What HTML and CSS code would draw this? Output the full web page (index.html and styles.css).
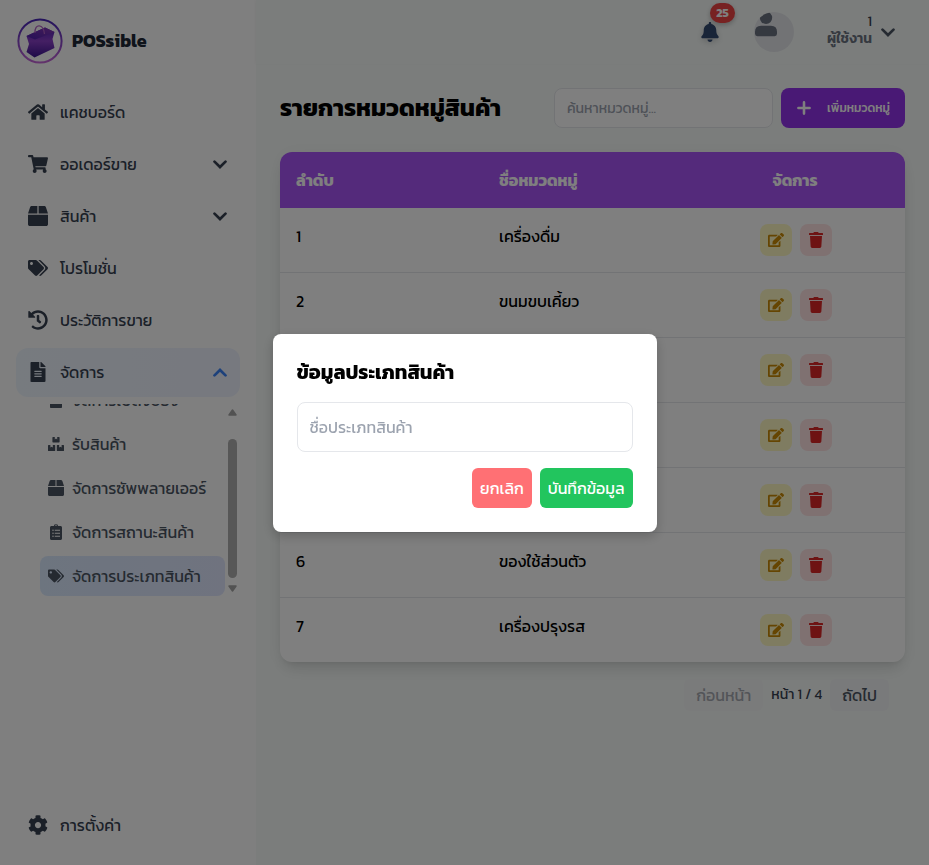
FILE: index.html
```
<!DOCTYPE html>
<html lang="th">
<head>
<meta charset="utf-8">
<title>POSsible</title>
<link rel="stylesheet" href="styles.css">
</head>
<body>
<svg class="sprite" aria-hidden="true">
  <symbol id="home" viewBox="0 0 576 512"><path d="M280.37 148.26L96 300.11V464a16 16 0 0 0 16 16l112.06-.29a16 16 0 0 0 15.92-16V368a16 16 0 0 1 16-16h64a16 16 0 0 1 16 16v95.64a16 16 0 0 0 16 16.05L464 480a16 16 0 0 0 16-16V300L295.67 148.26a12.19 12.19 0 0 0-15.3 0zM571.6 251.47L488 182.56V44.05a12 12 0 0 0-12-12h-56a12 12 0 0 0-12 12v72.61L318.47 43a48 48 0 0 0-61 0L4.34 251.47a12 12 0 0 0-1.6 16.9l25.5 31A12 12 0 0 0 45.15 301l235.22-193.74a12.19 12.19 0 0 1 15.3 0L530.9 301a12 12 0 0 0 16.9-1.6l25.5-31a12 12 0 0 0-1.7-16.93z"/></symbol>
  <symbol id="cart" viewBox="0 0 576 512"><path d="M528.12 301.319l47.273-208C578.806 78.301 567.391 64 551.99 64H159.208l-9.166-44.81C147.758 8.021 137.93 0 126.529 0H24C10.745 0 0 10.745 0 24v16c0 13.255 10.745 24 24 24h69.883l70.248 343.435C147.325 417.1 136 435.222 136 456c0 30.928 25.072 56 56 56s56-25.072 56-56c0-15.674-6.447-29.835-16.824-40h209.647C430.447 426.165 424 440.326 424 456c0 30.928 25.072 56 56 56s56-25.072 56-56c0-22.172-12.888-41.332-31.579-50.405l5.517-24.276c3.413-15.018-8.002-29.319-23.403-29.319H218.117l-6.545-32h293.145c11.206 0 20.92-7.754 23.403-18.681z"/></symbol>
  <symbol id="box" viewBox="0 0 512 512"><path d="M509.5 184.6L458.9 32.8C452.4 13.2 434.1 0 413.4 0H272v192h238.7c-.4-2.5-.4-5-1.2-7.4zM240 0H98.6c-20.7 0-39 13.2-45.5 32.8L2.5 184.6c-.8 2.4-.8 4.9-1.2 7.4H240V0zM0 224v240c0 26.5 21.5 48 48 48h416c26.5 0 48-21.5 48-48V224H0z"/></symbol>
  <symbol id="tags" viewBox="0 0 640 512"><path d="M497.941 225.941L286.059 14.059A48 48 0 0 0 252.118 0H48C21.49 0 0 21.49 0 48v204.118a48 48 0 0 0 14.059 33.941l211.882 211.882c18.744 18.745 49.136 18.746 67.882 0l204.118-204.118c18.745-18.745 18.745-49.137 0-67.882zM112 160c-26.51 0-48-21.49-48-48s21.49-48 48-48 48 21.49 48 48-21.49 48-48 48zm513.941 133.823L421.823 497.941c-18.745 18.745-49.137 18.745-67.882 0l-.36-.36L527.64 323.522c16.999-16.999 26.36-39.6 26.36-63.64s-9.362-46.641-26.36-63.64L331.397 0h48.721a48 48 0 0 1 33.941 14.059l211.882 211.882c18.745 18.745 18.745 49.137 0 67.882z"/></symbol>
  <symbol id="history" viewBox="0 0 512 512"><path d="M504 255.531c.253 136.64-111.18 248.372-247.82 248.468-59.015.042-113.223-20.53-155.822-54.911-11.077-8.94-11.905-25.541-1.839-35.607l11.267-11.267c8.609-8.609 22.353-9.551 31.891-1.984C173.062 425.135 212.781 440 256 440c101.705 0 184-82.311 184-184 0-101.705-82.311-184-184-184-48.814 0-93.149 18.969-126.068 49.932l50.754 50.754c10.08 10.08 2.941 27.314-11.313 27.314H24c-8.837 0-16-7.163-16-16V38.627c0-14.254 17.234-21.393 27.314-11.314l49.372 49.372C129.209 34.136 189.552 8 256 8c136.81 0 247.747 110.78 248 247.531zm-180.912 78.784l9.823-12.63c8.138-10.463 6.253-25.542-4.21-33.679L288 256.349V152c0-13.255-10.745-24-24-24h-16c-13.255 0-24 10.745-24 24v135.651l65.409 50.874c10.463 8.137 25.541 6.253 33.679-4.21z"/></symbol>
  <symbol id="file" viewBox="0 0 384 512"><path d="M224 136V0H24C10.7 0 0 10.7 0 24v464c0 13.3 10.7 24 24 24h336c13.3 0 24-10.7 24-24V160H248c-13.2 0-24-10.8-24-24zm64 236c0 6.6-5.4 12-12 12H108c-6.6 0-12-5.4-12-12v-8c0-6.6 5.4-12 12-12h168c6.6 0 12 5.4 12 12v8zm0-64c0 6.6-5.4 12-12 12H108c-6.6 0-12-5.4-12-12v-8c0-6.6 5.4-12 12-12h168c6.6 0 12 5.4 12 12v8zm0-72v8c0 6.6-5.4 12-12 12H108c-6.6 0-12-5.4-12-12v-8c0-6.6 5.4-12 12-12h168c6.6 0 12 5.4 12 12zm96-114.1v6.1H256V0h6.1c6.4 0 12.5 2.5 17 7l97.9 98c4.5 4.5 7 10.6 7 16.9z"/></symbol>
  <symbol id="cog" viewBox="0 0 512 512"><path d="M487.4 315.7l-42.6-24.6c4.3-23.2 4.3-47 0-70.2l42.6-24.6c4.9-2.8 7.1-8.6 5.5-14-11.1-35.6-30-67.8-54.7-94.6-3.8-4.1-10-5.1-14.8-2.3L380.8 110c-17.9-15.4-38.5-27.3-60.8-35.1V25.8c0-5.6-3.9-10.5-9.4-11.7-36.7-8.2-74.3-7.8-109.2 0-5.5 1.2-9.4 6.1-9.4 11.7V75c-22.2 7.9-42.8 19.8-60.8 35.1L88.7 85.5c-4.9-2.8-11-1.9-14.8 2.3-24.7 26.7-43.6 58.9-54.7 94.6-1.7 5.4.6 11.2 5.5 14L67.3 221c-4.3 23.2-4.3 47 0 70.2l-42.6 24.6c-4.9 2.8-7.1 8.6-5.5 14 11.1 35.6 30 67.8 54.7 94.6 3.8 4.1 10 5.1 14.8 2.3l42.6-24.6c17.9 15.4 38.5 27.3 60.8 35.1v49.2c0 5.6 3.9 10.5 9.4 11.7 36.7 8.2 74.3 7.8 109.2 0 5.5-1.2 9.4-6.1 9.4-11.7v-49.2c22.2-7.9 42.8-19.8 60.8-35.1l42.6 24.6c4.9 2.8 11 1.9 14.8-2.3 24.7-26.7 43.6-58.9 54.7-94.6 1.5-5.5-.7-11.3-5.6-14.1zM256 336c-44.1 0-80-35.9-80-80s35.9-80 80-80 80 35.9 80 80-35.9 80-80 80z"/></symbol>
  <symbol id="bell" viewBox="0 0 448 512"><path d="M224 512c35.32 0 63.97-28.65 63.97-64H160.03c0 35.35 28.65 64 63.97 64zm215.39-149.71c-19.32-20.76-55.47-51.99-55.47-154.29 0-77.7-54.48-139.9-127.94-155.16V32c0-17.67-14.32-32-31.98-32s-31.98 14.33-31.98 32v20.84C118.56 68.1 64.08 130.3 64.08 208c0 102.3-36.15 133.53-55.47 154.29-6 6.45-8.66 14.16-8.61 21.71.11 16.4 12.98 32 32.1 32h383.8c19.12 0 32-15.6 32.1-32 .05-7.55-2.61-15.27-8.61-21.71z"/></symbol>
  <symbol id="edit" viewBox="0 0 576 512"><path d="M402.6 83.2l90.2 90.2c3.8 3.8 3.8 10 0 13.8L274.4 405.6l-92.8 10.3c-12.4 1.4-22.9-9.1-21.5-21.5l10.3-92.8L388.8 83.2c3.8-3.8 10-3.8 13.8 0zm162-22.9l-48.8-48.8c-15.2-15.2-39.9-15.2-55.2 0l-35.4 35.4c-3.8 3.8-3.8 10 0 13.8l90.2 90.2c3.8 3.8 10 3.8 13.8 0l35.4-35.4c15.2-15.3 15.2-40 0-55.2zM384 346.2V448H64V128h229.8c3.2 0 6.2-1.3 8.5-3.5l40-40c7.6-7.6 2.2-20.5-8.5-20.5H48C21.5 64 0 85.5 0 112v352c0 26.5 21.5 48 48 48h352c26.5 0 48-21.5 48-48V306.2c0-10.7-12.9-16-20.5-8.5l-40 40c-2.2 2.3-3.5 5.3-3.5 8.5z"/></symbol>
  <symbol id="trash" viewBox="0 0 448 512"><path d="M432 32H312l-9.4-18.7A24 24 0 0 0 281.1 0H166.8a23.72 23.72 0 0 0-21.4 13.3L136 32H16A16 16 0 0 0 0 48v32a16 16 0 0 0 16 16h416a16 16 0 0 0 16-16V48a16 16 0 0 0-16-16zM53.2 467a48 48 0 0 0 47.9 45h245.8a48 48 0 0 0 47.9-45L416 128H32z"/></symbol>
  <symbol id="boxes" viewBox="0 0 16 16"><path d="M5 1h1.8v2.4l1.2-.8 1.2.8V1H11q.6 0 .6.6v4.2q0 .6-.6.6H5q-.6 0-.6-.6V1.600Q4.400 1 5 1zM.6 9h1.800v2.600l1.200-.8 1.200.8V9h1.800q.6 0 .6.6v4.800q0 .6-.6.6H.6q-.6 0-.6-.6V9.600Q0 9 .6 9zM9.400 9h1.800v2.600l1.200-.8 1.200.8V9h1.800q.6 0 .6.6v4.800q0 .6-.6.6H9.400q-.6 0-.6-.6V9.600q0-.6.6-.6z"/></symbol>
  <symbol id="doc" viewBox="0 0 16 16"><path d="M3 0h6v5h5v10.200q0 .8-.8.8H2.800q-.8 0-.8-.8V.8Q2 0 3 0zM10 0l4 4h-4z"/></symbol>
  <symbol id="clip" viewBox="0 0 384 512"><path fill-rule="evenodd" d="M336 64h-80c0-35.300-28.700-64-64-64s-64 28.700-64 64H48C21.500 64 0 85.500 0 112v352c0 26.500 21.500 48 48 48h288c26.500 0 48-21.500 48-48V112c0-26.500-21.500-48-48-48zM72 200a24 24 0 1 0 48 0a24 24 0 1 0-48 0zM72 296a24 24 0 1 0 48 0a24 24 0 1 0-48 0zM72 392a24 24 0 1 0 48 0a24 24 0 1 0-48 0zM168 40a24 24 0 1 1 48 0a24 24 0 1 1-48 0zM152 184h168v32H152zM152 280h168v32H152zM152 376h168v32H152z"/></symbol>
  <symbol id="chev" viewBox="0 0 14 9"><path d="M1.500 1.600L7 7l5.500-5.400" fill="none" stroke="currentColor" stroke-width="2.700" stroke-linecap="round" stroke-linejoin="miter"/></symbol>
</svg>

<div class="app">
  <aside class="sidebar">
    <div class="brand">
      <svg class="logo" viewBox="0 0 46 46">
        <defs>
          <linearGradient id="ring" x1="0" y1="0" x2="0" y2="1"><stop offset="0" stop-color="#4826b8"/><stop offset="1" stop-color="#c566d8"/></linearGradient>
          <linearGradient id="bag" x1="0" y1="0" x2="0" y2="1"><stop offset="0" stop-color="#4a1fb0"/><stop offset=".45" stop-color="#8a3fc8"/><stop offset="1" stop-color="#3b1590"/></linearGradient>
          <linearGradient id="bagtop" x1="0" y1="1" x2="1" y2="0"><stop offset="0" stop-color="#4a1fae"/><stop offset="1" stop-color="#8738b4"/></linearGradient>
        </defs>
        <circle cx="23" cy="23" r="21.600" fill="none" stroke="url(#ring)" stroke-width="2"/>
        <path d="M9.500 18L28 9.500l9.500 4.500-2 7 2 9L17.500 39.500 9.500 34l2.500-8z" fill="url(#bag)"/>
        <path d="M9.500 18L28 9.500l9.500 4.500L18 21.500z" fill="url(#bagtop)"/>
        <path d="M18 15c-.5-10 8.500-9.500 9.500 1" fill="none" stroke="#b161c4" stroke-width="1.300"/>
      </svg>
      <span>POSsible</span>
    </div>
    <nav class="menu">
      <a class="item"><svg class="ico"><use href="#home"/></svg><span>แคชบอร์ด</span></a>
      <a class="item"><svg class="ico"><use href="#cart"/></svg><span>ออเดอร์ขาย</span><svg class="chev"><use href="#chev"/></svg></a>
      <a class="item"><svg class="ico"><use href="#box"/></svg><span>สินค้า</span><svg class="chev"><use href="#chev"/></svg></a>
      <a class="item"><svg class="ico"><use href="#tags"/></svg><span>โปรโมชั่น</span></a>
      <a class="item"><svg class="ico"><use href="#history"/></svg><span>ประวัติการขาย</span></a>
      <a class="item open"><svg class="ico"><use href="#file"/></svg><span>จัดการ</span><svg class="chev"><use href="#chev"/></svg></a>
    </nav>
    <div class="submenu">
      <div class="sublist">
        <a class="sub"><svg><use href="#doc"/></svg><span>จัดการเปิดจบอง</span></a>
        <a class="sub"><svg><use href="#boxes"/></svg><span>รับสินค้า</span></a>
        <a class="sub"><svg><use href="#box"/></svg><span>จัดการซัพพลายเออร์</span></a>
        <a class="sub"><svg><use href="#clip"/></svg><span>จัดการสถานะสินค้า</span></a>
        <a class="sub active"><svg><use href="#tags"/></svg><span>จัดการประเภทสินค้า</span></a>
      </div>
      <div class="scroll">
        <svg viewBox="0 0 9 7"><path d="M4.500 1L8 6H1z"/></svg>
        <i></i>
        <svg viewBox="0 0 9 7"><path d="M4.500 6L1 1h7z"/></svg>
      </div>
    </div>
    <a class="item settings"><svg class="ico"><use href="#cog"/></svg><span>การตั้งค่า</span></a>
  </aside>

  <main>
    <header class="topbar">
      <div class="bell"><svg><use href="#bell"/></svg><b>25</b></div>
      <div class="avatar"><svg viewBox="0 0 40 40"><circle cx="12" cy="5.800" r="6.200"/><path d="M7 13.800h10q6 0 6 6v2q0 2.400-2.400 2.400H3.400Q1 24.200 1 21.800v-2q0-6 6-6z"/></svg></div>
      <div class="user"><span>1</span><b>ผู้ใช้งาน</b></div>
      <svg class="chev"><use href="#chev"/></svg>
    </header>
    <section class="content">
      <div class="head">
        <h1>รายการหมวดหมู่สินค้า</h1>
        <input class="search" placeholder="ค้นหาหมวดหมู่...">
        <button class="add"><svg viewBox="0 0 12 12"><path d="M6 1.200v9.600M1.200 6h9.600"/></svg><span>เพิ่มหมวดหมู่</span></button>
      </div>
      <div class="table">
        <div class="row th"><span>ลำดับ</span><span>ชื่อหมวดหมู่</span><span class="act">จัดการ</span></div>
        <div class="row"><span>1</span><span>เครื่องดื่ม</span><div class="act"><button class="e"><svg><use href="#edit"/></svg></button><button class="d"><svg><use href="#trash"/></svg></button></div></div>
        <div class="row"><span>2</span><span>ขนมขบเคี้ยว</span><div class="act"><button class="e"><svg><use href="#edit"/></svg></button><button class="d"><svg><use href="#trash"/></svg></button></div></div>
        <div class="row"><span></span><span></span><div class="act"><button class="e"><svg><use href="#edit"/></svg></button><button class="d"><svg><use href="#trash"/></svg></button></div></div>
        <div class="row"><span></span><span></span><div class="act"><button class="e"><svg><use href="#edit"/></svg></button><button class="d"><svg><use href="#trash"/></svg></button></div></div>
        <div class="row"><span></span><span></span><div class="act"><button class="e"><svg><use href="#edit"/></svg></button><button class="d"><svg><use href="#trash"/></svg></button></div></div>
        <div class="row"><span>6</span><span>ของใช้ส่วนตัว</span><div class="act"><button class="e"><svg><use href="#edit"/></svg></button><button class="d"><svg><use href="#trash"/></svg></button></div></div>
        <div class="row"><span>7</span><span>เครื่องปรุงรส</span><div class="act"><button class="e"><svg><use href="#edit"/></svg></button><button class="d"><svg><use href="#trash"/></svg></button></div></div>
      </div>
      <div class="pager"><button class="off">ก่อนหน้า</button><span>หน้า 1 / 4</span><button>ถัดไป</button></div>
    </section>
  </main>
</div>

<div class="overlay">
  <div class="modal">
    <h2>ข้อมูลประเภทสินค้า</h2>
    <input placeholder="ชื่อประเภทสินค้า">
    <div class="btns"><button class="cancel">ยกเลิก</button><button class="save">บันทึกข้อมูล</button></div>
  </div>
</div>
</body>
</html>
```
FILE: styles.css
```
* { box-sizing: border-box; margin: 0; }
body { font: 400 16px/24px Kanit, "Noto Sans", sans-serif; color: #000; background: #f7fbf9; height: 865px; overflow: hidden; }
button, input { font: inherit; border: 0; padding: 0; outline: 0; }
svg { fill: currentColor; flex: none; }
.sprite { position: absolute; width: 0; height: 0; }
.app { display: flex; height: 865px; }

.sidebar { width: 256px; flex: none; padding: 16px; background: #fff; display: flex; flex-direction: column; }
.brand { height: 50px; margin-bottom: 22px; padding-left: 1px; display: flex; align-items: center; gap: 9px; font-size: 18px; font-weight: 700; color: #1f2937; }
.brand span { margin-top: -1px; }
.logo { width: 46px; height: 46px; }
.menu { display: flex; flex-direction: column; gap: 4px; }
.item { height: 48px; padding: 0 12px; display: flex; align-items: center; gap: 12px; border-radius: 12px; color: #374151; }
.ico { width: 20px; height: 20px; }
.chev { width: 14px; height: 9px; }
.item .chev { margin-left: auto; margin-right: 1px; }
.item.open { background: linear-gradient(90deg, #eff6ff, #eef2ff); height: 49px; padding-bottom: 1px; }
.item.open .chev { transform: rotate(180deg); color: #3b82f6; }
.submenu { height: 193px; margin-top: 7px; margin-left: 24px; display: flex; overflow: hidden; }
.sublist { width: 185px; height: 193px; display: flex; flex-direction: column; justify-content: flex-end; gap: 4px; padding-bottom: 1px; overflow: hidden; }
.sub { height: 40px; flex: none; padding: 0 8px; display: flex; align-items: center; gap: 8px; border-radius: 8px; color: #4b5563; white-space: nowrap; }
.sub svg { width: 16px; height: 16px; }
.sub.active { background: linear-gradient(90deg, #dbeafe, #e0e7ff); }
.scroll { width: 15px; padding: 5px 3px; display: flex; flex-direction: column; color: #a5a5a5; }
.scroll svg { width: 9px; height: 7px; stroke: currentColor; stroke-width: 1.500; stroke-linejoin: round; }
.scroll i { height: 139px; margin: 23px 0 7px; border-radius: 5px; background: #aeaeae; }
.settings { margin-top: auto; }

main { flex: 1; min-width: 0; }
.topbar { height: 64px; padding-right: 34px; display: flex; align-items: center; justify-content: flex-end; position: relative; box-shadow: -1px 0 3px rgba(0,0,0,.04); }
.bell { position: relative; width: 18px; height: 20px; margin-right: 35px; color: #334a70; }
.bell svg { width: 18px; height: 20px; display: block; filter: drop-shadow(0 2px 3px rgba(0,0,0,.2)); }
.bell b { position: absolute; left: 9px; top: -19px; width: 25px; height: 20px; border-radius: 10px; background: #ef4444; color: #fff; font: 700 12px/20px Kanit, sans-serif; text-align: center; box-shadow: 0 2px 5px rgba(0,0,0,.25); }
.avatar { width: 40px; height: 40px; border-radius: 50%; background: #e5e7eb; overflow: hidden; color: #6b7280; margin-right: 33px; }
.avatar svg { display: block; width: 40px; height: 40px; }
.user { display: flex; flex-direction: column; align-items: flex-end; font-size: 14px; line-height: 16px; color: #374151; margin: -4px 9px 0 0; gap: 1px; }
.user b { font-weight: 600; color: #6b7280; }
.topbar .chev { color: #4b5563; }

.content { padding: 24px; }
.head { display: flex; height: 40px; align-items: center; }
h1 { font-size: 24px; line-height: 32px; font-weight: 700; margin-right: auto; }
.search { width: 219px; height: 40px; padding: 0 12px; border: 1px solid #e5e7eb; border-radius: 8px; background: #fff; font-size: 14px; margin-right: 8px; }
input::placeholder { color: #9ca3af; opacity: 1; }
.add { width: 124px; height: 40px; border-radius: 8px; background: #9333ea; color: #fff; padding: 0 15px 0 16px; display: flex; align-items: center; justify-content: space-between; font-size: 12px; font-weight: 500; white-space: nowrap; }
.add svg { width: 14px; height: 14px; stroke: #fff; stroke-width: 2.200; stroke-linecap: round; }
.table { margin-top: 24px; border-radius: 12px; background: #fff; overflow: hidden; box-shadow: 0 10px 15px -3px rgba(0,0,0,.1), 0 4px 6px -4px rgba(0,0,0,.1), 0 0 20px rgba(0,0,0,.04); }
.row { display: grid; grid-template-columns: 203px 204px 218px; height: 65px; padding-top: 16px; border-bottom: 1px solid #e5e7eb; }
.row > span { padding: 0 16px; }
.row.th { height: 56px; background: #a855f7; color: #fff; font-weight: 700; border: 0; }
.row.th .act { padding-right: 18px; }
.row:last-child { height: 64px; border: 0; }
.row .act { display: flex; justify-content: center; gap: 8px; }
.act button { width: 32px; height: 32px; border-radius: 8px; display: grid; place-items: center; }
.act svg { width: 16px; height: 16px; }
.e { background: #fef9c3; color: #ca8a04; }
.d { background: #fee2e2; color: #dc2626; }
.pager { margin: 17px 16px 0 0; display: flex; justify-content: flex-end; align-items: center; gap: 8px; font-size: 14px; color: #374151; }
.pager button { height: 32px; padding: 0 12px; border-radius: 6px; background: #f3f4f6; font-size: 16px; color: #4b5563; }
.pager .off { color: #a5a9b0; background: #f5f6f7; }

.overlay { position: fixed; inset: 0; background: rgba(0,0,0,.5); display: flex; align-items: center; justify-content: center; }
.modal { width: 384px; height: 198px; padding: 24px; border-radius: 8px; background: #fff; box-shadow: 0 4px 12px rgba(0,0,0,.2); display: flex; flex-direction: column; gap: 16px; }
h2 { font-size: 20px; line-height: 28px; font-weight: 700; }
.modal h2 { margin-bottom: 0; }
.modal input { height: 50px; padding: 0 12px; border: 1px solid #e5e7eb; border-radius: 8px; }
.btns { display: flex; justify-content: flex-end; gap: 8px; }
.btns button { height: 40px; padding: 0 8px; border-radius: 6px; color: #fff; }
.cancel { background: #ff7074; }
.save { background: #22c55e; }
```
